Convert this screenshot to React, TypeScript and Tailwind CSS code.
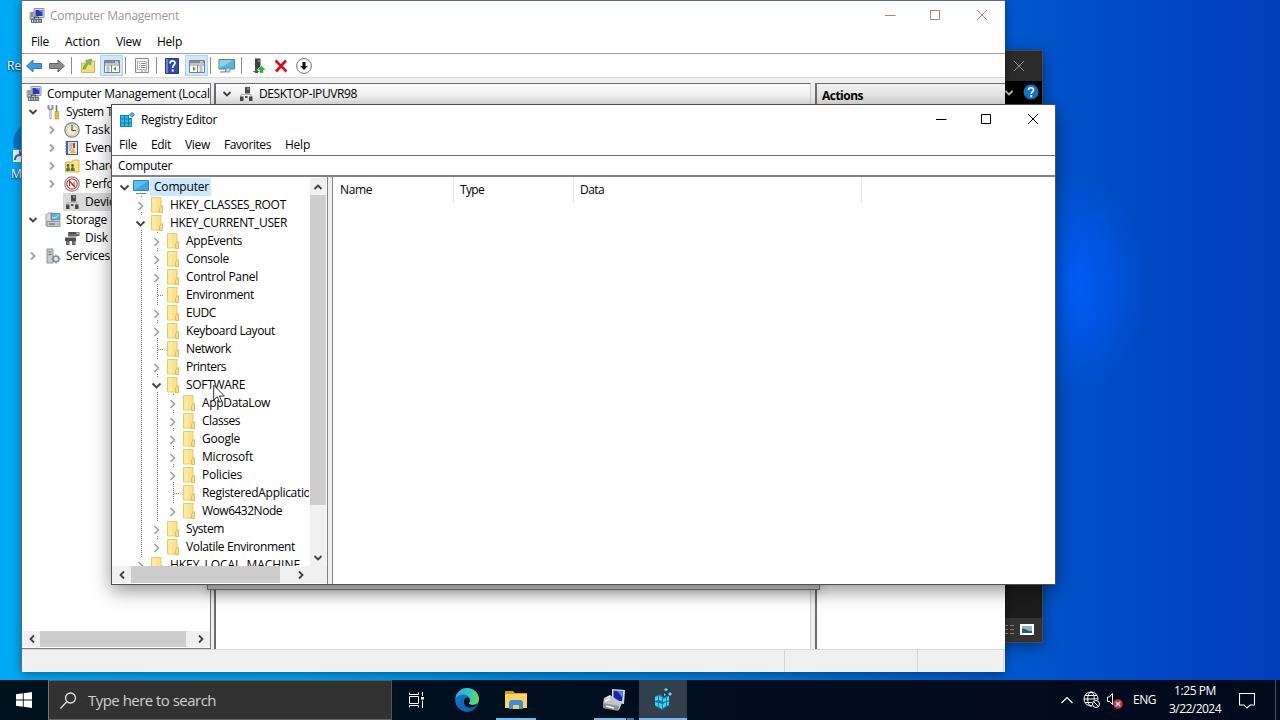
import React, { useLayoutEffect, useRef, useState } from "react";

/* Label whose tracking is adjusted so that the text fills the given width. */
function Label({ text, w, className = "" }: { text: string; w: number; className?: string }) {
  const ref = useRef<HTMLSpanElement>(null);
  const [spacing, setSpacing] = useState(0);
  useLayoutEffect(() => {
    if (ref.current) {
      const natural = ref.current.getBoundingClientRect().width;
      setSpacing((w - natural) / text.length);
    }
  }, [text, w]);
  return (
    <span ref={ref} className={"inline-block shrink-0 whitespace-pre " + className} style={{ letterSpacing: spacing + "px" }}>
      {text}
    </span>
  );
}

/* ---------- icons ---------- */

function Chevron({ dir, color = "#404040", className = "" }: { dir: "up" | "down" | "left" | "right"; color?: string; className?: string }) {
  const d = {
    up: "M1.5 7 5 3.5 8.5 7",
    down: "M1.5 3 5 6.5 8.5 3",
    left: "M7 1.5 3.5 5 7 8.5",
    right: "M3 1.5 6.5 5 3 8.5",
  }[dir];
  return (
    <svg viewBox="0 0 10 10" className={"h-[10px] w-[10px] shrink-0 " + className}>
      <path d={d} fill="none" stroke={color} strokeWidth="1.8" />
    </svg>
  );
}

function ManagementIcon() {
  return (
    <svg viewBox="0 0 16 16" className="h-4 w-4 shrink-0">
      <path d="M5 .5h10v9H5z" fill="#d5d8dc" stroke="#9298a0" />
      <path d="M6.500 2h7v6h-7z" fill="#2638b8" />
      <path d="M9 2h4.500v3z" fill="#6e8af0" />
      <path d="M1 4.500h4v7H1z" fill="#b6bac0" stroke="#7c8086" strokeWidth=".7" />
      <path d="M2 6h2M2 8h2" stroke="#555" strokeWidth=".8" />
      <path d="M2 10.500h11v4.500H2z" fill="#68727c" />
      <path d="M5.500 10.500v-1.500h4v1.500" fill="none" stroke="#444" />
      <path d="M3.500 12v2M6 12v2M8.500 12v2M11 12v2" stroke="#d4d9de" />
    </svg>
  );
}

function RegistryIcon() {
  return (
    <svg viewBox="0 0 16 16" className="h-4 w-4 shrink-0">
      <path d="M1 3h9v3h3v9H1z" fill="#0d7fb4" />
      <path d="M2 4h3v2.500H2zM6 4h3v2.500H6zM2 7.500h3v3H2zM6 7.500h3v3H6zM10 7.500h2.500v3H10zM2 11.500h3V14H2zM6 11.500h3V14H6zM10 11.500h2.500V14H10z" fill="#35b8e4" />
      <path d="m13 .500 2.500 2.200L13 5.200l-2.500-2.500z" fill="#4fb6e6" stroke="#0e6a9c" strokeWidth=".8" />
    </svg>
  );
}

function FolderIcon() {
  return (
    <svg viewBox="0 0 14 16" className="h-4 w-[14px] shrink-0">
      <path d="M1.500.500h9.500v14.500H1.500z" fill="#fbe28e" stroke="#e9c965" />
      <path d="M2 1h4v13.500H2z" fill="#fde9a4" />
      <path d="M10.500 9.500l2-1v7h-3v-4z" fill="#f8dc80" stroke="#dfb84f" strokeWidth=".9" />
    </svg>
  );
}

function MonitorIcon() {
  return (
    <svg viewBox="0 0 16 16" className="h-4 w-4 shrink-0">
      <path d="M.500 1.500h15v10H.500z" fill="#3aa8e8" stroke="#3480b4" />
      <path d="M1 2h14L1 11z" fill="#5cc2f6" />
      <path d="M3 14.500h10.500" stroke="#63879e" />
    </svg>
  );
}

function DeviceIcon() {
  return (
    <svg viewBox="0 0 16 16" className="h-4 w-4 shrink-0">
      <path d="M7 1h5v6.500H7z" fill="#4a4a4a" />
      <path d="M9 1.500h2V4H9z" fill="#8a8a8a" />
      <path d="M3 12V8.500h10V12" fill="none" stroke="#b4b4b4" />
      <path d="M2 10.500h3.500V15H2zM11 10.500h3.500V15H11z" fill="#4a4a4a" />
      <path d="M7 10h2.500v2H7z" fill="#555" />
    </svg>
  );
}

function ToolsIcon() {
  return (
    <svg viewBox="0 0 16 16" className="h-4 w-4 shrink-0">
      <path d="M3.500 1v3.500L5.500 6l2-1.500V1M5.500 6v9" fill="none" stroke="#8d9298" strokeWidth="2" />
      <path d="M5.500 6v8" stroke="#e4e7e9" strokeWidth=".8" />
      <path d="M11.500 1v7" stroke="#777" strokeWidth="1.500" />
      <path d="M10 7.500h3.500V15H10z" fill="#efb92c" stroke="#b98a1c" strokeWidth=".6" />
    </svg>
  );
}

function ClockIcon() {
  return (
    <svg viewBox="0 0 16 16" className="h-4 w-4 shrink-0">
      <circle cx="8" cy="8" r="7.200" fill="#f1ead0" stroke="#7f8488" strokeWidth="1.200" />
      <circle cx="8" cy="8" r="5.500" fill="none" stroke="#d0c9ae" />
      <path d="M8 3v5.500h4" fill="none" stroke="#4b5054" strokeWidth="1.200" />
    </svg>
  );
}

function EventIcon() {
  return (
    <svg viewBox="0 0 16 16" className="h-4 w-4 shrink-0">
      <path d="M2 1h12v14H2z" fill="#39579e" />
      <path d="M4 2h9v12H4z" fill="#e3e4e6" />
      <path d="M5 4h4M5 6h3M5 8h3M5 10h2" stroke="#8f98a4" />
      <path d="M1 3h3M1 6h3M1 9h3M1 12h3" stroke="#7b7b7b" />
      <path d="M10 3v5" stroke="#d03a2b" strokeWidth="2" />
      <path d="m6 13 3-5 3 5z" fill="#f0b51f" />
    </svg>
  );
}

function SharedIcon() {
  return (
    <svg viewBox="0 0 16 16" className="h-4 w-4 shrink-0">
      <path d="M1.500 4H8l1-2h6v12H1.500z" fill="#f8e384" stroke="#cfa83a" strokeWidth=".8" />
      <circle cx="4" cy="7.500" r="1.400" fill="#7a5326" />
      <circle cx="8.500" cy="7.500" r="1.400" fill="#7a5326" />
      <path d="M2 13c0-3 1-4 2.300-4S6 10 6 13zM6.700 13c0-3 .5-4 1.800-4s2.300 1 2.300 4z" fill="#45853b" />
    </svg>
  );
}

function PerfIcon() {
  return (
    <svg viewBox="0 0 16 16" className="h-4 w-4 shrink-0">
      <circle cx="8" cy="8" r="7.200" fill="#fff" stroke="#85898c" strokeWidth="1.200" />
      <circle cx="8" cy="8" r="5.200" fill="none" stroke="#cc3b42" strokeWidth="1.200" />
      <path d="M5.500 10V5.500l4.500 5v-5" fill="none" stroke="#7b3a42" strokeWidth=".9" />
      <path d="m5 4.500 6 6.500" stroke="#d32f2f" strokeWidth="1.500" />
    </svg>
  );
}

function StorageIcon() {
  return (
    <svg viewBox="0 0 16 16" className="h-4 w-4 shrink-0">
      <path d="M1 3 4 .800h4v13H1z" fill="#d7dde1" stroke="#8a949b" strokeWidth=".8" />
      <path d="M6 1.500h9v6.500H6z" fill="#5cb5d5" stroke="#5f7885" strokeWidth=".8" />
      <path d="M7 5.500c3 1.500 5-1 7-3" fill="none" stroke="#d5f3f4" />
      <path d="M2 9.500h13v5H2z" fill="#c6cdd2" stroke="#7c868c" strokeWidth=".8" />
      <path d="M4 12h6" stroke="#555" /><path d="M12.500 12h1" stroke="#2fa540" />
    </svg>
  );
}

function DiskIcon() {
  return (
    <svg viewBox="0 0 16 16" className="h-4 w-4 shrink-0">
      <path d="M4 2h11.500v4H4z" fill="#6a6d6f" />
      <path d="M5 3h7" stroke="#444" strokeWidth="1.500" />
      <path d="M12.500 2.500h2v1.500h-2z" fill="#ccc" />
      <path d="M1 7.500h11V11H1z" fill="#4d4f50" />
      <path d="M2 11h3.500v4H2zM8 11h3.500v4H8z" fill="#5c5f60" />
      <path d="M3.500 13h1M9.500 13h1" stroke="#ddd" />
      <path d="M4 6.500h9" stroke="#a5a8a9" />
    </svg>
  );
}

function ServicesIcon() {
  return (
    <svg viewBox="0 0 16 16" className="h-4 w-4 shrink-0">
      <path d="M2 1h6v14H2z" fill="#c8cdd1" stroke="#858c92" strokeWidth=".9" />
      <path d="M3.500 4h3M3.500 6.500h3" stroke="#666" />
      <circle cx="11" cy="11" r="2.800" fill="#e8ecef" stroke="#7f8d98" strokeWidth="1.600" />
      <path d="M11 6.500v2M11 13.500v2M6.500 11h2M13.500 11h2M8 8l1 1M13 13l1 1M14 8l-1 1M8 14l1-1" stroke="#7f8d98" strokeWidth="1.300" />
    </svg>
  );
}

function ArrowIcon({ back }: { back?: boolean }) {
  return (
    <svg viewBox="0 0 16 16" className="h-4 w-4 shrink-0">
      {back ? (
        <path d="M.500 8 7 2v3.500h8.500v5H7V14z" fill="#34a2e4" stroke="#45698b" strokeWidth=".9" />
      ) : (
        <path d="M15.500 8 9 2v3.500H.500v5H9V14z" fill="#8b8b8b" stroke="#5c5c5c" strokeWidth=".9" />
      )}
    </svg>
  );
}

function UpFolderIcon() {
  return (
    <svg viewBox="0 0 16 16" className="h-4 w-4 shrink-0">
      <path d="M1.500 5h5L8 3h6.500v11.500h-13z" fill="#f6dc80" stroke="#c9a23c" strokeWidth=".8" />
      <path d="M3 11c.5-3 2-5 4-6.500L5.500 2.500 11.500 1l-1 6-1.500-1.300C7 7 6 8.500 5.500 11z" fill="#7cc64b" stroke="#4a9430" strokeWidth=".6" />
    </svg>
  );
}

function PaneIcon({ flip }: { flip?: boolean }) {
  return (
    <svg viewBox="0 0 16 16" className="h-4 w-4 shrink-0">
      <path d="M.500 2.500h15v12H.500z" fill="#fff" stroke="#777f87" />
      <path d="M1 3h14v2.500H1z" fill="#7f8b97" />
      <path d="M11 4h3" stroke="#fff" />
      <path d="M1 7h14" stroke="#7e8790" />
      {flip ? (
        <g>
          <path d="M8.500 7v7.500" stroke="#7e8790" />
          <path d="m4 8.500 3 2.300-3 2.200z" fill="#5ba72a" />
          <path d="M10.500 9h3M10.500 11h3M10.500 13h3" stroke="#74808a" />
        </g>
      ) : (
        <g>
          <path d="M7.500 7v7.500" stroke="#7e8790" />
          <path d="m12 8.500-3 2.300 3 2.200z" fill="#5ba72a" />
          <path d="M2.500 9h3M2.500 11h3M2.500 13h3" stroke="#74808a" />
        </g>
      )}
    </svg>
  );
}

function PropsIcon() {
  return (
    <svg viewBox="0 0 16 16" className="h-4 w-4 shrink-0">
      <path d="M1.500.500h13v14h-13z" fill="#f4f4f4" stroke="#8c8c8c" />
      <path d="M3.500 3.500h9v8h-9z" fill="#fff" stroke="#a0a0a0" strokeWidth=".8" />
      <path d="M7 5.500h4.500M7 7.500h4.500M7 9.500h4.500M4.700 5.500h1M4.700 7.500h1M4.700 9.500h1" stroke="#777" strokeWidth=".9" />
      <path d="M7 13h2M10.500 13h2" stroke="#888" />
    </svg>
  );
}

function HelpIcon() {
  return (
    <svg viewBox="0 0 16 16" className="h-4 w-4 shrink-0">
      <path d="M1.500.500h13v15h-13z" fill="#304ba8" stroke="#263b84" />
      <path d="M2 1h2v14H2z" fill="#7187ca" />
      <path d="M6 5.500C6 2 11 2 11 5c0 2-2.300 2-2.300 5" fill="none" stroke="#fff" strokeWidth="1.700" />
      <path d="M7.700 11.500h2v2h-2z" fill="#fff" />
    </svg>
  );
}

function RemoteIcon() {
  return (
    <svg viewBox="0 0 18 16" className="h-4 w-[18px] shrink-0">
      <path d="M1 1.500h15.500v9.500H1z" fill="#58b4dd" stroke="#56808f" />
      <path d="M1.500 2h14L1.500 10z" fill="#8fd2ec" />
      <path d="M2 14h5l2-3" fill="none" stroke="#587d92" strokeWidth="1.200" />
      <path d="M8 10h4v4H8z" fill="#b8dceb" stroke="#56808f" strokeWidth=".7" />
    </svg>
  );
}

function UpdateIcon() {
  return (
    <svg viewBox="0 0 16 16" className="h-4 w-4 shrink-0">
      <path d="M4 .500h5.500V12H4z" fill="#3f4444" />
      <path d="M7 2h1.500v2H7z" fill="#8d9292" />
      <path d="M2 13.500h8" stroke="#777" /><path d="M4 11h3v4H4z" fill="#555" />
      <path d="m10.500 7.500 4.500 4.500h-2.500v3h-4v-3H6z" fill="#33b03a" stroke="#fff" strokeWidth=".5" />
    </svg>
  );
}

function RedXIcon() {
  return (
    <svg viewBox="0 0 16 16" className="h-4 w-4 shrink-0">
      <path d="m2.500 2.500 11 11M13 2.500l-10 11" stroke="#cf1124" strokeWidth="2.700" />
    </svg>
  );
}

function DownCircleIcon() {
  return (
    <svg viewBox="0 0 16 16" className="h-4 w-4 shrink-0">
      <circle cx="8" cy="8" r="7.400" fill="#fff" stroke="#707070" />
      <path d="M6.500 4h3v4h2.300L8 12 4.200 8h2.300z" fill="#111" />
    </svg>
  );
}

function CaptionButtons({ color, className = "" }: { color: string; className?: string }) {
  return (
    <svg viewBox="0 0 104 12" className={"h-3 w-[104px] shrink-0 " + className} fill="none" stroke={color}>
      <path d="M0 6.500h10.500" />
      <path d="M45.500 1.500h9v9h-9z" />
      <path d="m92 1 10 10M102 1 92 11" />
    </svg>
  );
}

/* ---------- shared pieces ---------- */

function HScroll({ className, thumb }: { className: string; thumb: string }) {
  return (
    <div className={"flex shrink-0 items-center bg-[#f0f0f0] " + className}>
      <Chevron dir="left" className="ml-[5px] mr-[3px]" />
      <div className={"h-full bg-[#cdcdcd] " + thumb} />
      <Chevron dir="right" className="ml-auto mr-[4px]" />
    </div>
  );
}

/* ---------- computer management ---------- */

type ConsoleNode = { pad: string; arrow?: "down" | "right"; icon: React.ReactNode; text: string; w: number; selected?: boolean };

const consoleNodes: ConsoleNode[] = [
  { pad: "pl-[6px]", arrow: "down", icon: <ToolsIcon />, text: "System Tools", w: 68 },
  { pad: "pl-[25px]", arrow: "right", icon: <ClockIcon />, text: "Task Scheduler", w: 83 },
  { pad: "pl-[25px]", arrow: "right", icon: <EventIcon />, text: "Event Viewer", w: 70 },
  { pad: "pl-[25px]", arrow: "right", icon: <SharedIcon />, text: "Shared Folders", w: 80 },
  { pad: "pl-[25px]", arrow: "right", icon: <PerfIcon />, text: "Performance", w: 69 },
  { pad: "pl-[41px]", icon: <DeviceIcon />, text: "Device Manager", w: 88, selected: true },
  { pad: "pl-[6px]", arrow: "down", icon: <StorageIcon />, text: "Storage", w: 41 },
  { pad: "pl-[41px]", icon: <DiskIcon />, text: "Disk Management", w: 98 },
  { pad: "pl-[6px]", arrow: "right", icon: <ServicesIcon />, text: "Services and Applications", w: 137 },
];

function Sep({ className = "" }: { className?: string }) {
  return <div className={"h-[17px] w-px shrink-0 bg-[#8c8c8c] " + className} />;
}

function ManagementWindow() {
  return (
    <section className="absolute left-[21px] top-0 flex h-[672px] w-[984px] flex-col border-l border-t border-[#53707f] bg-white shadow-[0_2px_10px_rgba(0,0,0,0.4)]">
      <header className="flex h-[30px] shrink-0 items-center pl-[7px] pr-[16px]">
        <ManagementIcon />
        <Label text="Computer Management" w={129} className="ml-[5px] text-[#999]" />
        <CaptionButtons color="#8c8c8c" className="-mt-[2px] ml-auto" />
      </header>
      <nav className="flex h-[23px] shrink-0 items-center border-b border-[#a0a0a0] pl-[9px]">
        <Label text="File" w={18} />
        <Label text="Action" w={35} className="ml-4" />
        <Label text="View" w={25} className="ml-4" />
        <Label text="Help" w={25} className="ml-4" />
      </nav>
      <div className="flex h-[24px] shrink-0 items-center border-b border-[#d9d9d9] pl-1">
        <ArrowIcon back />
        <span className="ml-[7px] flex"><ArrowIcon /></span>
        <Sep className="ml-[6px]" />
        <span className="ml-[8px] flex"><UpFolderIcon /></span>
        <span className="ml-[4px] flex h-[21px] w-[23px] items-center justify-center border border-[#a9d5f5] bg-[#cfe8fb]"><PaneIcon /></span>
        <Sep className="ml-[2px]" />
        <span className="ml-[8px] flex"><PropsIcon /></span>
        <Sep className="ml-[6px]" />
        <span className="ml-[7px] flex"><HelpIcon /></span>
        <span className="ml-[5px] flex h-[21px] w-[23px] items-center justify-center border border-[#a9d5f5] bg-[#cfe8fb]"><PaneIcon flip /></span>
        <Sep className="ml-[2px]" />
        <span className="ml-[7px] flex"><RemoteIcon /></span>
        <Sep className="ml-[5px]" />
        <span className="ml-[9px] flex"><UpdateIcon /></span>
        <span className="ml-[6px] flex"><RedXIcon /></span>
        <span className="ml-[7px] flex"><DownCircleIcon /></span>
      </div>
      <div className="flex min-h-0 flex-1 bg-[#f0f0f0] pt-[5px]">
        <div className="flex w-[189px] shrink-0 flex-col overflow-hidden border-b border-r border-t border-[#7a7a7a] bg-white pt-px">
          <div className="flex h-[18px] shrink-0 items-center pl-[4px]">
            <ManagementIcon />
            <Label text="Computer Management (Local)" w={166} className="ml-[5px]" />
          </div>
          {consoleNodes.map((n) => (
            <div key={n.text} className={"flex h-[18px] shrink-0 items-center " + n.pad}>
              {n.arrow && <Chevron dir={n.arrow} color={n.arrow === "down" ? "#404040" : "#a0a0a0"} className="mr-[6px]" />}
              <div className={"flex h-full items-center pl-px " + (n.selected ? "bg-[#d9d9d9]" : "")}>
                {n.icon}
                <Label text={n.text} w={n.w} className="ml-[5px]" />
              </div>
            </div>
          ))}
          <HScroll className="mb-px mt-auto h-4" thumb="w-[146px]" />
        </div>
        <div className="ml-[3px] flex w-[597px] flex-col border-l-2 border-r border-t border-[#6d6d6d] border-r-[#d0d0d0] bg-white">
          <div className="flex h-[20px] shrink-0 items-center bg-gradient-to-b from-[#fefefe] to-[#e9e9e9] pl-[6px]">
            <Chevron dir="down" />
            <span className="ml-[6px] flex"><DeviceIcon /></span>
            <Label text="DESKTOP-IPUVR98" w={98} className="ml-[5px]" />
          </div>
        </div>
        <div className="ml-[4px] flex flex-1 flex-col border-l-2 border-t border-[#6d6d6d] bg-white">
          <div className="flex h-[23px] shrink-0 items-center bg-gradient-to-b from-[#efefef] to-[#dedede] pl-[5px]">
            <Label text="Actions" w={41} className="font-bold" />
          </div>
        </div>
      </div>
      <footer className="flex h-[23px] shrink-0 border-t border-[#d7d7d7] bg-[#f0f0f0]">
        <div className="w-[763px] border-r border-[#d4d4d4]" />
        <div className="w-[133px] border-r border-[#d4d4d4]" />
        <div className="w-[86px] border-r border-[#d4d4d4]" />
      </footer>
    </section>
  );
}

/* ---------- registry editor ---------- */

type Key = { text: string; w: number; depth: number; arrow?: "down" | "right"; last?: boolean };

const keys: Key[] = [
  { text: "HKEY_CLASSES_ROOT", w: 116, depth: 1, arrow: "right" },
  { text: "HKEY_CURRENT_USER", w: 117, depth: 1, arrow: "down" },
  { text: "AppEvents", w: 56, depth: 2, arrow: "right" },
  { text: "Console", w: 43, depth: 2, arrow: "right" },
  { text: "Control Panel", w: 72, depth: 2, arrow: "right" },
  { text: "Environment", w: 68, depth: 2 },
  { text: "EUDC", w: 30, depth: 2, arrow: "right" },
  { text: "Keyboard Layout", w: 89, depth: 2, arrow: "right" },
  { text: "Network", w: 45, depth: 2 },
  { text: "Printers", w: 40, depth: 2, arrow: "right" },
  { text: "SOFTWARE", w: 59, depth: 2, arrow: "down" },
  { text: "AppDataLow", w: 68, depth: 3, arrow: "right" },
  { text: "Classes", w: 38, depth: 3, arrow: "right" },
  { text: "Google", w: 38, depth: 3, arrow: "right" },
  { text: "Microsoft", w: 51, depth: 3, arrow: "right" },
  { text: "Policies", w: 40, depth: 3, arrow: "right" },
  { text: "RegisteredApplications", w: 121, depth: 3 },
  { text: "Wow6432Node", w: 80, depth: 3, arrow: "right", last: true },
  { text: "System", w: 38, depth: 2, arrow: "right" },
  { text: "Volatile Environment", w: 109, depth: 2, arrow: "right", last: true },
  { text: "HKEY_LOCAL_MACHINE", w: 130, depth: 1, arrow: "right" },
];

function Guide({ arrow, line, last }: { arrow?: "down" | "right"; line?: boolean; last?: boolean }) {
  return (
    <svg viewBox="0 0 16 18" className="h-[18px] w-4 shrink-0" fill="none">
      {line && <path d={last ? "M9.500 0v9" : "M9.500 0v18"} stroke="#777" strokeDasharray="1 1" />}
      {line && !arrow && <path d="M10 9.500h6" stroke="#777" strokeDasharray="1 1" />}
      {arrow && <path d="M2 2h12v14H2z" fill="#fff" />}
      {arrow === "right" && <path d="m6.500 6 4 4-4 4" stroke="#a0a0a0" strokeWidth="1.700" />}
      {arrow === "down" && <path d="m4.500 7.500 4 4 4-4" stroke="#404040" strokeWidth="1.800" />}
    </svg>
  );
}

function Rail() {
  return (
    <svg viewBox="0 0 16 18" className="h-[18px] w-4 shrink-0">
      <path d="M9.500 0v18" stroke="#777" strokeDasharray="1 1" />
    </svg>
  );
}

function KeyRow({ item }: { item: Key }) {
  return (
    <div className="flex h-[18px] shrink-0 items-center pl-[4px]">
      <div className="w-4 shrink-0" />
      {item.depth > 1 && <Rail />}
      {item.depth > 2 && <Rail />}
      <Guide arrow={item.arrow} line last={item.last} />
      <div className="ml-[2px] flex"><FolderIcon /></div>
      <Label text={item.text} w={item.w} className="ml-[6px]" />
    </div>
  );
}

function RegistryWindow() {
  return (
    <section className="absolute left-[111px] top-[104px] flex h-[481px] w-[945px] flex-col border border-[#4f4f4f] bg-white shadow-[0_6px_18px_rgba(0,0,0,0.42)]">
      <header className="flex h-[30px] shrink-0 items-center pl-[7px] pr-[15px]">
        <RegistryIcon />
        <Label text="Registry Editor" w={76} className="-mt-px ml-[6px]" />
        <CaptionButtons color="#000" className="-mt-[2px] ml-auto" />
      </header>
      <nav className="flex h-[20px] shrink-0 items-center pl-[7px]">
        <Label text="File" w={18} />
        <Label text="Edit" w={20} className="ml-[14px]" />
        <Label text="View" w={25} className="ml-[14px]" />
        <Label text="Favorites" w={47} className="ml-[14px]" />
        <Label text="Help" w={25} className="ml-[14px]" />
      </nav>
      <div className="flex h-[22px] shrink-0 items-center border-b-2 border-t border-b-[#828282] border-t-[#6b6b6b] pl-[6px]">
        <Label text="Computer" w={54} className="mt-px" />
      </div>
      <div className="flex min-h-0 flex-1">
        <div className="flex w-[216px] shrink-0 flex-col border-r border-[#828282] pb-px">
          <div className="flex min-h-0 flex-1 pt-px">
            <div className="flex w-[197px] shrink-0 flex-col overflow-hidden">
              <div className="flex h-[18px] shrink-0 items-center pl-[4px]">
                <Guide arrow="down" />
                <div className="ml-px flex"><MonitorIcon /></div>
                <div className="ml-px flex h-full items-center bg-[#cce8ff] pl-[4px] pr-[2px]">
                  <Label text="Computer" w={55} />
                </div>
              </div>
              {keys.map((k) => <KeyRow key={k.text} item={k} />)}
            </div>
            <div className="ml-px flex w-[16px] flex-col items-center bg-[#f0f0f0]">
              <div className="flex h-[17px] shrink-0 items-center"><Chevron dir="up" /></div>
              <div className="h-[310px] w-full bg-[#cdcdcd]" />
              <div className="mb-[3px] mt-auto flex"><Chevron dir="down" /></div>
            </div>
          </div>
          <div className="flex bg-[#f0f0f0]">
            <HScroll className="h-[17px] w-[198px]" thumb="ml-px w-[149px]" />
          </div>
        </div>
        <div className="w-[4px] shrink-0 bg-[#f0f0f0]" />
        <div className="flex-1 border-l border-[#828282]">
          <div className="flex h-[26px] items-center">
            <div className="flex h-full w-[121px] items-center border-r border-[#e5e5e5] pl-[7px]"><Label text="Name" w={32} /></div>
            <div className="flex h-full w-[120px] items-center border-r border-[#e5e5e5] pl-[6px]"><Label text="Type" w={24} /></div>
            <div className="flex h-full w-[288px] items-center border-r border-[#e5e5e5] pl-[6px]"><Label text="Data" w={24} /></div>
          </div>
        </div>
      </div>
    </section>
  );
}

/* ---------- dark explorer window behind ---------- */

function DarkWindow() {
  return (
    <section className="absolute left-[980px] top-[50px] flex h-[593px] w-[63px] flex-col items-end border border-[#464b50] bg-[#1c1c1c] shadow-[0_3px_14px_rgba(0,0,0,0.4)]">
      <div className="flex h-[30px] w-full shrink-0 items-center justify-end bg-[#2b2b2b] pr-[17px]">
        <svg viewBox="0 0 12 12" className="h-3 w-3" stroke="#8e8e8e"><path d="m1 1 10 10M11 1 1 11" /></svg>
      </div>
      <div className="flex h-6 w-full shrink-0 items-center justify-end bg-black pr-[3px]">
        <Chevron dir="down" color="#c4c4c4" />
        <svg viewBox="0 0 16 16" className="-mt-[2px] ml-[9px] h-4 w-4">
          <circle cx="8" cy="8" r="7.500" fill="#1374c8" />
          <path d="M5.500 6C5.500 3 10.500 3 10.500 6c0 1.800-2.300 1.500-2.300 4" fill="none" stroke="#fff" strokeWidth="1.700" />
          <path d="M7.200 11.200h2v2h-2z" fill="#fff" />
        </svg>
      </div>
      <div className="mt-auto flex h-6 w-full shrink-0 items-center justify-end bg-[#333] pb-[2px] pr-[8px]">
        <svg viewBox="0 0 10 10" className="mr-[5px] h-[10px] w-[10px]" stroke="#858585">
          <path d="M0 1.500h3M5 1.500h4M0 5.500h3M5 5.500h4M0 9.500h3M5 9.500h4" />
        </svg>
        <svg viewBox="0 0 14 11" className="h-[11px] w-[14px]">
          <path d="M0 0h14v11H0z" fill="#fff" />
          <path d="M2 2h10v7H2z" fill="#8ab4dc" />
          <path d="M2 5c4-1 6 3 10 2v2H2z" fill="#31566f" />
        </svg>
      </div>
    </section>
  );
}

/* ---------- taskbar ---------- */

function Taskbar() {
  return (
    <footer className="absolute bottom-0 left-0 flex h-10 w-[1280px] items-center bg-gradient-to-r from-[#00121e] to-[#020a1e] text-white">
      <div className="flex w-12 shrink-0 justify-center">
        <svg viewBox="0 0 16 16" className="h-4 w-4" fill="#fff">
          <path d="M0 2.300 6.800 1.300v6.300H0zM7.700 1.200 16 0v7.600H7.700zM0 8.500h6.800v6.300L0 13.800zM7.700 8.500H16V16l-8.300-1.200z" />
        </svg>
      </div>
      <div className="flex h-full w-[344px] shrink-0 items-center border border-b-[#666] border-l-[#777] border-r-[#555] border-t-[#515d62] bg-[#323232] pl-[11px]">
        <svg viewBox="0 0 17 17" className="h-[17px] w-[17px]" fill="none" stroke="#e4e4e4" strokeWidth="1.300">
          <circle cx="10.500" cy="6" r="5" /><path d="M7 9.500.500 16.500" />
        </svg>
        <Label text="Type here to search" w={128} className="ml-[11px] text-[15px] leading-5 text-[#cfcfcf]" />
      </div>
      <div className="flex w-12 shrink-0 justify-center">
        <svg viewBox="0 0 17 16" className="h-4 w-[17px]" fill="none" stroke="#fff">
          <path d="M1.500.500v2h9v-2M1.500 15.500v-2h9v2M1.500 4.500h9v7h-9zM14.500 0v4M14.500 8.500V16" />
          <path d="M13 5h3v2.500h-3z" fill="#fff" stroke="none" />
        </svg>
      </div>
      <div className="ml-[3px] flex w-12 shrink-0 justify-center">
        <svg viewBox="0 0 24 24" className="h-6 w-6">
          <defs>
            <linearGradient id="edgeTop" x1="0" y1=".4" x2="1" y2=".6"><stop stopColor="#2ba9ea" /><stop offset=".55" stopColor="#35c4c2" /><stop offset="1" stopColor="#6ad653" /></linearGradient>
            <linearGradient id="edgeLow" x1="0" y1="0" x2="1" y2="1"><stop stopColor="#1c82d8" /><stop offset="1" stopColor="#0c4f9e" /></linearGradient>
          </defs>
          <circle cx="12" cy="12" r="11.800" fill="url(#edgeLow)" />
          <path d="M.300 11C1 4.500 6 0 12.200 0 19 0 24 5 24 11c0 4-3 6-6.500 6-3 0-4-1.300-3.500-2.200 1-1.300 1.300-2 1.100-3.300C14.700 9 12 6.500 8 6.500 4 6.500 1.200 8.500.300 11z" fill="url(#edgeTop)" />
          <path d="M15 11.500c.2 1.300 0 2-1 3.200-.6.900.5 2.300 3.500 2.300 2 0 4-.7 4.700-1.400C21 18.500 18 19.500 15.500 19.500 11 19.500 8.500 16.500 9 13c.3-2 1.500-3.200 3-3.500 1.600.1 2.800.8 3 2z" fill="#04111d" />
          <path d="M9 10c-2 3-1.500 8 2.500 11 2.500 1.500 5.500 1.200 7.500.3-4 3.300-10 3-13.500-.500C3 18 4 12.500 9 10z" fill="#1763b5" />
        </svg>
      </div>
      <div className="relative ml-px flex h-full w-12 shrink-0 items-center justify-center">
        <svg viewBox="0 0 22 20" className="h-5 w-[22px]">
          <path d="M0 1h8l2 2h12v5H0z" fill="#d89b25" />
          <path d="M0 4h22v14H0z" fill="#fdd368" />
          <path d="M4 19v-7l2-2h10l2 2v7h-4v-4H8v4z" fill="#3f8dd4" />
          <path d="M8 15h6v4H8z" fill="#f4cf72" />
        </svg>
        <div className="absolute bottom-0 left-[4px] h-[2px] w-10 bg-[#76b9ed]" />
      </div>
      <div className="relative ml-[50px] flex h-full w-12 shrink-0 items-center justify-center">
        <svg viewBox="0 0 24 24" className="-ml-px h-6 w-6">
          <path d="m10 1 13 1-1 14-12-2z" fill="#d6dadd" />
          <path d="m11.500 2.500 9.500.800-.800 10-8.700-1z" fill="#1a25a8" />
          <path d="m15 3 6 .500-.500 6z" fill="#5b83ed" />
          <path d="m2 10 6-3 12 8-3 7-15-2-1-4z" fill="#c0c5c8" />
          <path d="m1 15 16 3-1 5L1 20z" fill="#8c9195" />
          <path d="m5 10 3-2M3 13l5-2M4 18l8 2" stroke="#f4f4f4" strokeWidth="1.500" />
        </svg>
        <div className="absolute bottom-0 left-[4px] h-[2px] w-8 bg-[#76b9ed]" />
        <div className="absolute bottom-0 left-[37px] h-[2px] w-[7px] bg-[#4f7ba0]" />
      </div>
      <div className="relative ml-px flex h-full w-12 shrink-0 items-center justify-center bg-[#333f4a]">
        <svg viewBox="0 0 20 24" className="h-6 w-5">
          <path d="m2 8 6-2 2 3 6-1v9l-7 5-7-4z" fill="#167ba8" />
          <path d="m2 9 3-1v4l-3 1zM6 8l3 1v4l-3-1zM2 14l3 1v4l-3-2zM6 15l3 1v5l-3-2zM10 11l3-1v3l-3 1zM10 16l3-2v4l-3 2zM14 9l2-1v4l-2 1zM14 14l2-1v4l-2 1z" fill="#48d0f2" />
          <path d="m13 0 2 1.500-2 2-2-2zM17 4l2 2-2 2-2-2zM11 5l2 2-2 1z" fill="#5bd5f5" />
        </svg>
        <div className="absolute bottom-0 left-0 h-[2px] w-12 bg-[#76b9ed]" />
      </div>
      <div className="ml-auto flex h-full items-center">
        <svg viewBox="0 0 12 8" className="h-2 w-3" fill="none" stroke="#fff" strokeWidth="1.200"><path d="m.500 7 5.500-5.500L11.500 7" /></svg>
        <svg viewBox="0 0 18 18" className="ml-[10px] h-[18px] w-[18px]" fill="none" stroke="#fff">
          <circle cx="8" cy="8" r="7" /><path d="M1 8h14M2 4.500h12M2 11.500h12" /><ellipse cx="8" cy="8" rx="3.300" ry="7" />
          <circle cx="13" cy="13" r="4.500" fill="#030c1e" stroke="none" /><circle cx="13" cy="13" r="3.500" /><path d="m10.500 10.500 5 5" />
        </svg>
        <svg viewBox="0 0 18 18" className="ml-[5px] mt-[2px] h-[18px] w-[18px]" fill="none" stroke="#fff">
          <path d="M1.500 5h2l3-3.500v11L3.500 9.500h-2z" />
          <circle cx="12" cy="12" r="4.800" fill="#c9323b" stroke="none" /><path d="m9.800 9.800 4.400 4.400M14.200 9.800l-4.400 4.400" strokeWidth="1.200" />
        </svg>
        <Label text="ENG" w={23} className="ml-[9px]" />
        <div className="ml-[13px] flex w-[52px] flex-col items-center">
          <Label text="1:25 PM" w={42} className="leading-[18px]" />
          <Label text="3/22/2024" w={52} className="leading-[18px]" />
        </div>
        <svg viewBox="0 0 16 17" className="ml-[18px] mr-[25px] h-[17px] w-4" fill="none" stroke="#fff" strokeWidth="1.100">
          <path d="M.500 1.500h15v11.500h-4.500l-3 3-3-3H.500z" />
        </svg>
      </div>
      <div className="absolute right-[4px] top-0 h-10 w-px bg-[#46505c]" />
    </footer>
  );
}

export default function App() {
  return (
    <main className="relative h-[720px] w-[1280px] select-none overflow-hidden bg-[radial-gradient(ellipse_75px_110px_at_1072px_285px,#005cf5_0%,rgba(0,92,245,0)_100%),linear-gradient(90deg,#00a9f6_0px,#00a2ee_300px,#0078d6_760px,#0058cc_1010px,#004fc9_1080px,#0046c3_1170px,#033db9_1280px)] font-['Open_Sans','Noto_Sans',sans-serif] text-[12px] leading-[16px] text-black">
      <div className="absolute left-[7px] top-[58px] w-[14px] overflow-hidden text-white [text-shadow:0_1px_2px_#000]">
        <Label text="Recycle" w={42} />
      </div>
      <div className="absolute left-[11px] top-[166px] w-[10px] overflow-hidden text-white [text-shadow:0_1px_2px_#000]">
        <Label text="Microsoft" w={52} />
      </div>
      <svg viewBox="0 0 12 46" className="absolute left-[12px] top-[120px] h-[46px] w-3">
        <path d="M10 6C3 11 0 18 2 28l8 2z" fill="#0871c9" />
        <path d="M1 30h11v12H1z" fill="#f4f4f4" /><path d="M3 40c0-4 2-5 5-5v-3l4 4" fill="none" stroke="#2169a8" strokeWidth="2" />
      </svg>
      <DarkWindow />
      <ManagementWindow />
      <div className="absolute left-[207px] top-[570px] h-[20px] w-[613px] border border-[#7b7b7b] bg-[#cfcfcf] shadow-[0_3px_12px_rgba(0,0,0,0.2)]" />
      <RegistryWindow />
      <Taskbar />
      <svg viewBox="0 0 13 20" className="absolute left-[213px] top-[384px] h-5 w-[13px]">
        <path d="M.700 1v15l3.500-3.300 2.400 5.500 2.200-1-2.400-5.200h5z" fill="#fff" stroke="#222" strokeWidth=".9" />
      </svg>
    </main>
  );
}
